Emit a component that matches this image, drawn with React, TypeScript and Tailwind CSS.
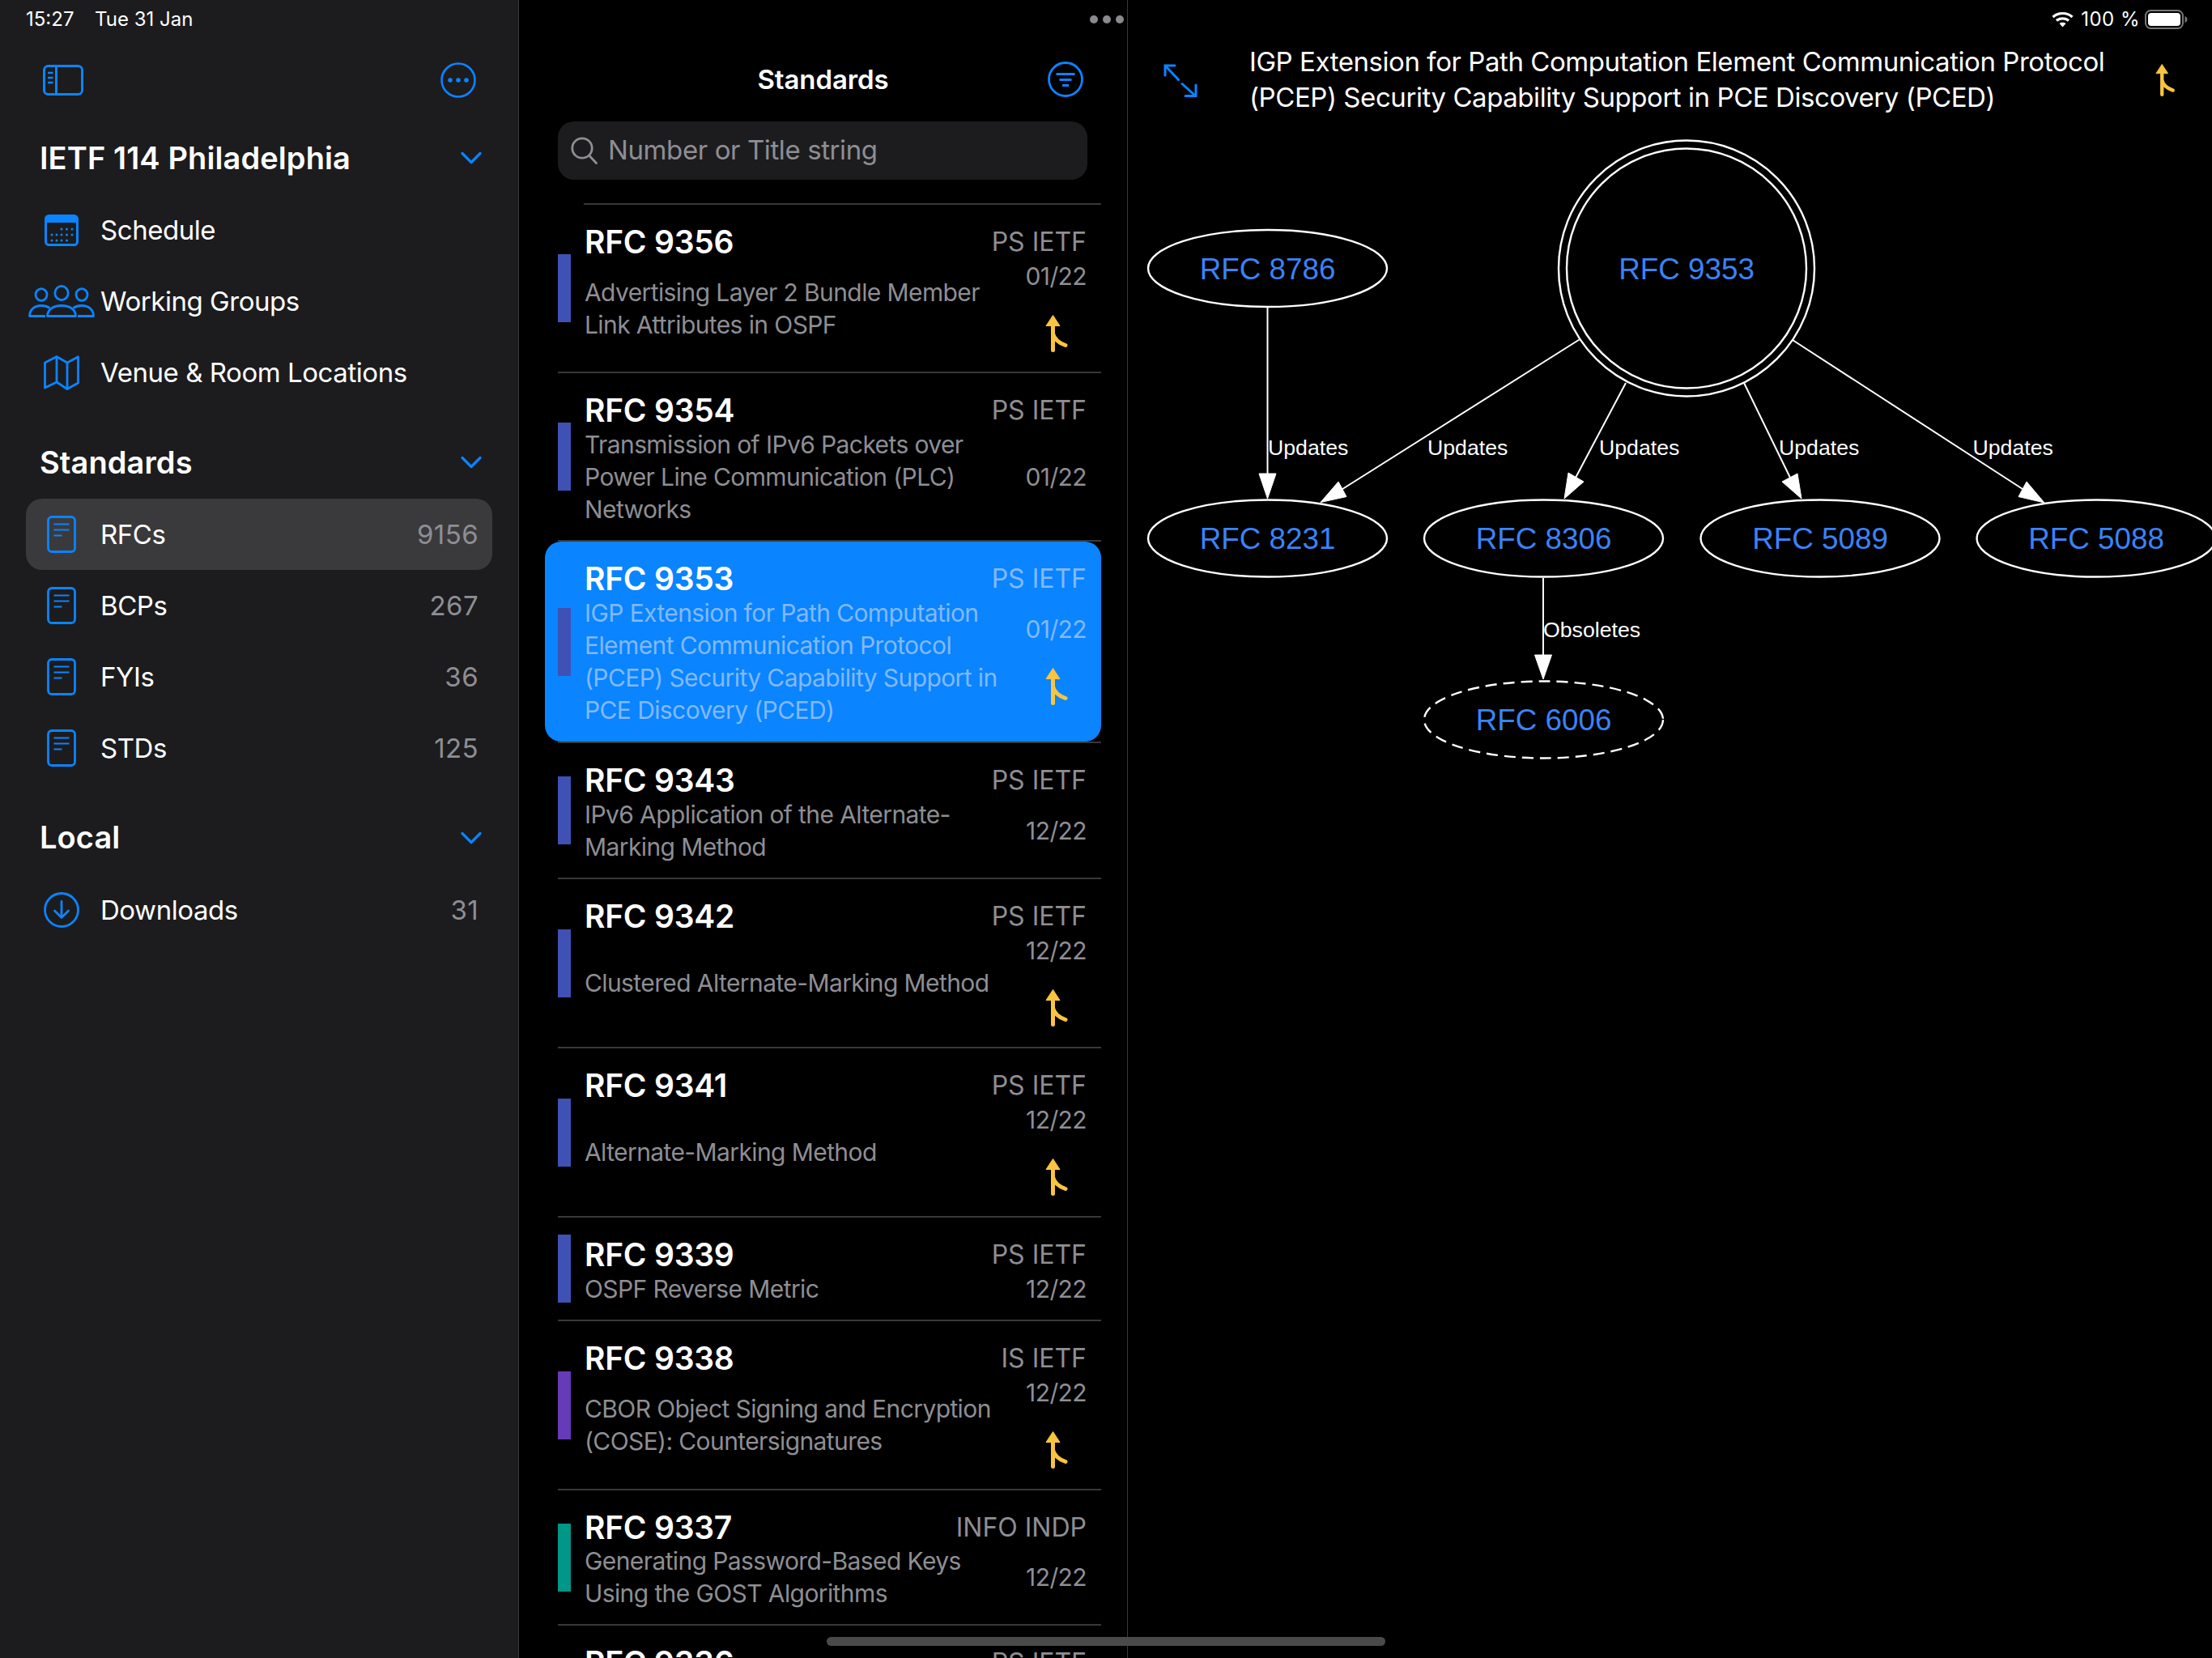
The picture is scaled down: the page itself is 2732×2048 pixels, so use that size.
import React from "react";

const BLUE = "#0a84ff";

function Chevron() {
  return (
    <svg width="26" height="16" viewBox="0 0 26 16" fill="none" stroke="#0a84ff" strokeWidth="3.2" strokeLinecap="round" strokeLinejoin="round">
      <path d="M2 2.5 L13 13.5 L24 2.5" />
    </svg>
  );
}

function SidebarToggle() {
  return (
    <svg width="50" height="38" viewBox="0 0 50 38" fill="none" stroke="#0a84ff" strokeWidth="3">
      <rect x="1.5" y="1.5" width="47" height="35" rx="5" />
      <path d="M16.5 1.5 V36.5" />
      <path d="M6 10 H12.5 M6 16 H12.5 M6 22 H12.5" strokeWidth="2.4" />
    </svg>
  );
}

function EllipsisCircle() {
  return (
    <svg width="44" height="44" viewBox="0 0 44 44" fill="none">
      <circle cx="22" cy="22" r="20.5" stroke="#0a84ff" strokeWidth="2.6" />
      <circle cx="12" cy="22" r="2.8" fill="#0a84ff" />
      <circle cx="22" cy="22" r="2.8" fill="#0a84ff" />
      <circle cx="32" cy="22" r="2.8" fill="#0a84ff" />
    </svg>
  );
}

function CalendarIcon() {
  const dots: [number, number][] = [
    [21, 18], [27.5, 18], [34, 18],
    [9, 25], [15, 25], [21, 25], [27.5, 25], [34, 25],
    [9, 32], [15, 32], [21, 32], [27.5, 32],
  ];
  return (
    <svg width="42" height="39" viewBox="0 0 42 39" fill="none">
      <rect x="1.5" y="1.5" width="39" height="36" rx="4" stroke="#0a84ff" strokeWidth="3" />
      <path d="M1 10 V5 a4 4 0 0 1 4 -4 H37 a4 4 0 0 1 4 4 V10 Z" fill="#0a84ff" />
      {dots.map(([x, y], i) => (
        <circle key={i} cx={x} cy={y} r="1.5" fill="#0a84ff" />
      ))}
    </svg>
  );
}

function PeopleIcon() {
  return (
    <svg width="82" height="40" viewBox="0 0 82 40" fill="none" stroke="#0a84ff" strokeWidth="2.8" strokeLinejoin="round">
      <ellipse cx="41" cy="10" rx="8.2" ry="8.6" />
      <ellipse cx="16" cy="12" rx="7" ry="7.4" />
      <ellipse cx="66" cy="12" rx="7" ry="7.4" />
      <path d="M23.5 38.5 C23.5 30 31 25.5 41 25.5 C51 25.5 58.5 30 58.5 38.5 Z" />
      <path d="M21 38.5 H1.5 C1.5 30 8 25.5 16 25.5 C20 25.5 23.5 26.5 26.5 28.5" />
      <path d="M61 38.5 H80.5 C80.5 30 74 25.5 66 25.5 C62 25.5 58.5 26.5 55.5 28.5" />
    </svg>
  );
}

function MapIcon() {
  return (
    <svg width="44" height="43" viewBox="0 0 44 43" fill="none" stroke="#0a84ff" strokeWidth="2.8" strokeLinejoin="round">
      <path d="M1.5 9 L16 1.5 L29 9 L42.5 1.8 V34 L29 41.5 L16 33 L1.5 40 Z" />
      <path d="M16 1.5 V33 M29 9 V41.5" />
    </svg>
  );
}

function DocIcon() {
  return (
    <svg width="36" height="46" viewBox="0 0 36 46" fill="none" stroke="#0a84ff" strokeWidth="2.8">
      <rect x="1.5" y="1.5" width="33" height="43" rx="4.5" />
      <path d="M8.5 10.5 H27.5 M8.5 17.5 H27.5 M8.5 24.5 H18.5" strokeWidth="2.2" />
    </svg>
  );
}

function DownloadIcon() {
  return (
    <svg width="44" height="44" viewBox="0 0 44 44" fill="none" stroke="#0a84ff" strokeWidth="2.8" strokeLinecap="round" strokeLinejoin="round">
      <circle cx="22" cy="22" r="20.5" />
      <path d="M22 11.5 V31 M13.5 23 L22 31.5 L30.5 23" />
    </svg>
  );
}

function FilterIcon() {
  return (
    <svg width="44" height="44" viewBox="0 0 44 44" fill="none" stroke="#0a84ff">
      <circle cx="22" cy="22" r="20.5" strokeWidth="2.8" />
      <path d="M10.5 15.5 H33.5 M14.5 22.5 H29.5 M18 29.5 H26" strokeWidth="2.8" />
    </svg>
  );
}

function SearchIcon() {
  return (
    <svg width="33" height="34" viewBox="0 0 33 34" fill="none" stroke="#8e8e93" strokeWidth="2.8" strokeLinecap="round">
      <circle cx="14" cy="14" r="12.2" />
      <path d="M23 23.5 L31.5 32.5" />
    </svg>
  );
}

function MergeArrow({ size = 46 }: { size?: number }) {
  return (
    <svg width={(size * 28) / 46} height={size} viewBox="0 0 28 46" fill="none">
      <path d="M9.5 0.5 L18 13.5 H1 Z" fill="#f9c440" stroke="#f9c440" strokeWidth="1" strokeLinejoin="round" />
      <path d="M9.5 12 V43.5 M9.5 23 C11 30 18 35 25 37.5" stroke="#f9c440" strokeWidth="5" strokeLinecap="round" />
    </svg>
  );
}

function ExpandIcon() {
  return (
    <svg width="42" height="41" viewBox="0 0 42 41" fill="none" stroke="#0a84ff" strokeWidth="3" strokeLinecap="round">
      <path d="M14 2 H2 V14 M2.5 2.5 L18.5 19.5" />
      <path d="M23 24.5 L39 39 M40 26 V39.5 H27" />
    </svg>
  );
}

function Wifi() {
  return (
    <svg width="27" height="20" viewBox="0 0 27 20" fill="none" stroke="#ffffff" strokeWidth="3.2">
      <path d="M1.5 7 C8 1 19 1 25.5 7" />
      <path d="M6 11.5 C10 8 17 8 21 11.5" />
      <path d="M13.5 19.5 L9.5 15 C11.5 13.4 15.5 13.4 17.5 15 Z" fill="#ffffff" stroke="none" />
    </svg>
  );
}

function Battery() {
  return (
    <svg width="53" height="24" viewBox="0 0 53 24" fill="none">
      <rect x="1" y="1" width="46" height="22" rx="6.5" stroke="#77777a" strokeWidth="2" />
      <rect x="4" y="4" width="40" height="16" rx="4" fill="#ffffff" />
      <path d="M49.5 8 C52 9 52.5 10.5 52.5 12 C52.5 13.5 52 15 49.5 16 Z" fill="#77777a" />
    </svg>
  );
}

function SectionHeading({ title, className }: { title: string; className: string }) {
  return (
    <div className={`flex items-center justify-between pl-[49px] pr-[45px] ${className}`}>
      <span className="text-[38px] tracking-[0.1px] font-semibold text-white">{title}</span>
      <Chevron />
    </div>
  );
}

function NavRow({ icon, label, count, active }: { icon: React.ReactNode; label: string; count?: string; active?: boolean }) {
  return (
    <div className={`mx-[32px] h-[88px] flex items-center rounded-[20px] pr-[17px] ${active ? "bg-[#3a3a3c]" : ""}`}>
      <div className="w-[88px] flex justify-center shrink-0">{icon}</div>
      <span className="ml-[4px] pt-[2px] flex-1 text-[33px] tracking-[-0.45px] text-white">{label}</span>
      {count && <span className="pt-[2px] text-[33px] tracking-[0.4px] text-[#8e8e93]">{count}</span>}
    </div>
  );
}

function Sidebar() {
  return (
    <aside className="w-[640px] shrink-0 h-full bg-[#1c1c1e]">
      <div className="h-[48px] pl-[32px] flex items-center text-[24px] text-white">
        <span className="w-[85px]">15:27</span>
        <span>Tue 31 Jan</span>
      </div>
      <div className="h-[102px] flex items-center justify-between pl-[53px] pr-[52px]">
        <SidebarToggle />
        <EllipsisCircle />
      </div>
      <SectionHeading title="IETF 114 Philadelphia" className="h-[90px]" />
      <NavRow icon={<CalendarIcon />} label="Schedule" />
      <NavRow icon={<PeopleIcon />} label="Working Groups" />
      <NavRow icon={<MapIcon />} label="Venue & Room Locations" />
      <SectionHeading title="Standards" className="mt-[22px] h-[90px]" />
      <NavRow icon={<DocIcon />} label="RFCs" count="9156" active />
      <NavRow icon={<DocIcon />} label="BCPs" count="267" />
      <NavRow icon={<DocIcon />} label="FYIs" count="36" />
      <NavRow icon={<DocIcon />} label="STDs" count="125" />
      <SectionHeading title="Local" className="mt-[21px] h-[91px]" />
      <NavRow icon={<DownloadIcon />} label="Downloads" count="31" />
    </aside>
  );
}

type Rfc = {
  num: string;
  status: string;
  date: string;
  lines: string[];
  bar: string;
  height: string;
  merge?: boolean;
  selected?: boolean;
};

const rfcs: Rfc[] = [
  { num: "RFC 9356", status: "PS IETF", date: "01/22", lines: ["Advertising Layer 2 Bundle Member", "Link Attributes in OSPF"], bar: "bg-[#3f51b5]", height: "h-[208px]", merge: true },
  { num: "RFC 9354", status: "PS IETF", date: "01/22", lines: ["Transmission of IPv6 Packets over", "Power Line Communication (PLC)", "Networks"], bar: "bg-[#3f51b5]", height: "h-[208px]" },
  { num: "RFC 9353", status: "PS IETF", date: "01/22", lines: ["IGP Extension for Path Computation", "Element Communication Protocol", "(PCEP) Security Capability Support in", "PCE Discovery (PCED)"], bar: "bg-[#3f51b5]", height: "h-[249px]", merge: true, selected: true },
  { num: "RFC 9343", status: "PS IETF", date: "12/22", lines: ["IPv6 Application of the Alternate-", "Marking Method"], bar: "bg-[#3f51b5]", height: "h-[168px]" },
  { num: "RFC 9342", status: "PS IETF", date: "12/22", lines: ["Clustered Alternate-Marking Method"], bar: "bg-[#3f51b5]", height: "h-[209px]", merge: true },
  { num: "RFC 9341", status: "PS IETF", date: "12/22", lines: ["Alternate-Marking Method"], bar: "bg-[#3f51b5]", height: "h-[209px]", merge: true },
  { num: "RFC 9339", status: "PS IETF", date: "12/22", lines: ["OSPF Reverse Metric"], bar: "bg-[#3f51b5]", height: "h-[128px]" },
  { num: "RFC 9338", status: "IS IETF", date: "12/22", lines: ["CBOR Object Signing and Encryption", "(COSE): Countersignatures"], bar: "bg-[#673ab7]", height: "h-[209px]", merge: true },
  { num: "RFC 9337", status: "INFO INDP", date: "12/22", lines: ["Generating Password-Based Keys", "Using the GOST Algorithms"], bar: "bg-[#009688]", height: "h-[167px]" },
  { num: "RFC 9336", status: "PS IETF", date: "12/22", lines: ["X.509 Certificate General-Purpose", "Extended Key Usage (EKU)"], bar: "bg-[#3f51b5]", height: "h-[168px]" },
];

function RfcRow({ rfc }: { rfc: Rfc }) {
  const muted = rfc.selected ? "text-[#82b9fd]" : "text-[#8e8e93]";
  return (
    <div className={`${rfc.height} ml-[48px] mr-[32px] border-b-2 border-[#38383a] shrink-0`}>
      <div className={`h-full flex items-center pr-[18px] ${rfc.selected ? "-ml-[16px] pl-[16px] bg-[#0a84ff] rounded-[20px]" : ""}`}>
        <div className={`w-[16px] h-[84px] shrink-0 ${rfc.bar}`} />
        <div className="ml-[17px] flex-1 min-w-0 h-full flex flex-col pt-[26px]">
          <div className="h-[40px] leading-[40px] text-[39px] font-semibold text-white tracking-[-0.25px]">{rfc.num}</div>
          <div className={`-mt-[17px] flex-1 flex flex-col justify-center text-[30px] tracking-[-0.6px] leading-[40px] whitespace-nowrap ${muted}`}>
            {rfc.lines.map((l) => (
              <div key={l}>{l}</div>
            ))}
          </div>
        </div>
        <div className={`shrink-0 h-full flex flex-col items-end pt-[26px] ${muted}`}>
          <div className="h-[40px] leading-[40px] text-[32px] whitespace-nowrap">{rfc.status}</div>
          <div className={`-mt-[17px] flex-1 flex flex-col items-end justify-center text-[30px] tracking-[-0.6px] leading-[40px] ${rfc.merge ? "pb-[6px]" : ""}`}>
            <div>{rfc.date}</div>
            {rfc.merge && (
              <div className="mt-[28px] mr-[23px]">
                <MergeArrow />
              </div>
            )}
          </div>
        </div>
      </div>
    </div>
  );
}

function ListPane() {
  return (
    <section className="relative w-[753px] shrink-0 h-full bg-black border-x border-[#38383a] flex flex-col">
      <div className="h-[48px] shrink-0 flex items-center justify-end gap-[6px] pr-[4px]">
        <span className="w-[10px] h-[10px] rounded-full bg-[#8a8a8e]" />
        <span className="w-[10px] h-[10px] rounded-full bg-[#8a8a8e]" />
        <span className="w-[10px] h-[10px] rounded-full bg-[#8a8a8e]" />
      </div>
      <div className="relative h-[102px] flex items-center justify-center shrink-0">
        <span className="text-[33px] font-semibold text-white tracking-[-0.1px]">Standards</span>
        <div className="absolute right-[54px] top-[28px]">
          <FilterIcon />
        </div>
      </div>
      <div className="ml-[48px] mr-[49px] h-[72px] rounded-[20px] bg-[#1c1c1e] flex items-center pl-[16px] shrink-0">
        <SearchIcon />
        <span className="ml-[13px] text-[33px] tracking-[-0.4px] text-[#8e8e93]">Number or Title string</span>
      </div>
      <div className="mt-[29px] ml-[80px] mr-[32px] h-[2px] bg-[#38383a] shrink-0" />
      {rfcs.map((r) => (
        <RfcRow key={r.num} rfc={r} />
      ))}
    </section>
  );
}

function Node({ cx, cy, label, dashed }: { cx: number; cy: number; label: string; dashed?: boolean }) {
  return (
    <g>
      <ellipse cx={cx} cy={cy} rx="147.5" ry="47.5" fill="none" stroke="#fff" strokeWidth="2.4" strokeDasharray={dashed ? "14 8" : undefined} />
      <text x={cx} y={cy + 13} textAnchor="middle" fontSize="36.8" fill="#3b82f6" fontFamily="'Liberation Sans', Arial, sans-serif">
        {label}
      </text>
    </g>
  );
}

function Edge({ d, head }: { d: string; head: string }) {
  return (
    <g>
      <path d={d} stroke="#fff" strokeWidth="2" fill="none" />
      <polygon points={head} fill="#fff" stroke="#fff" strokeWidth="1" />
    </g>
  );
}

function Label({ x, y, text }: { x: number; y: number; text: string }) {
  return (
    <text x={x} y={y} fontSize="26.7" fill="#fff" fontFamily="'Liberation Sans', Arial, sans-serif">
      {text}
    </text>
  );
}

function Graph() {
  return (
    <svg viewBox="1393 150 1339 900" width="1339" height="900" className="block overflow-hidden">
      <ellipse cx="2083" cy="331.5" rx="158" ry="158" fill="none" stroke="#fff" strokeWidth="2.4" />
      <ellipse cx="2083" cy="331.5" rx="148" ry="148" fill="none" stroke="#fff" strokeWidth="2.4" />
      <text x="2083" y="344.5" textAnchor="middle" fontSize="36.8" fill="#3b82f6" fontFamily="'Liberation Sans', Arial, sans-serif">RFC 9353</text>
      <Node cx={1565.5} cy={331.5} label="RFC 8786" />
      <Node cx={1565.5} cy={665} label="RFC 8231" />
      <Node cx={1906.5} cy={665} label="RFC 8306" />
      <Node cx={2248} cy={665} label="RFC 5089" />
      <Node cx={2589} cy={665} label="RFC 5088" />
      <Node cx={1906.5} cy={889} label="RFC 6006" dashed />
      <Edge d="M1565.5 380 V590" head="1555,585 1576,585 1565.5,616" />
      <Edge d="M1950.5 419.5 L1655 606" head="1653,595 1663,613.5 1631,620.5" />
      <Edge d="M2008 473 L1946 590" head="1937,584 1956,595 1932,616" />
      <Edge d="M2154 473 L2211 590" head="2220,585 2201,595 2225,616" />
      <Edge d="M2214 420 L2498 604" head="2503,595 2493,613.5 2525,621" />
      <Edge d="M1906 714 V815" head="1895.5,809 1916.5,809 1906,839" />
      <Label x={1566} y={562} text="Updates" />
      <Label x={1763} y={562} text="Updates" />
      <Label x={1975} y={562} text="Updates" />
      <Label x={2197} y={562} text="Updates" />
      <Label x={2436.5} y={562} text="Updates" />
      <Label x={1906} y={786.5} text="Obsoletes" />
    </svg>
  );
}

function DetailPane() {
  return (
    <section className="flex-1 min-w-0 h-full bg-black">
      <div className="h-[48px] flex items-center justify-end pr-[30px] text-[24px] text-white">
        <Wifi />
        <span className="ml-[9px] mr-[6px] tracking-[0.5px]">100 %</span>
        <Battery />
      </div>
      <div className="h-[102px] flex items-center pl-[44px] pr-[46px]">
        <ExpandIcon />
        <div className="ml-[64px] pb-[2px] flex-1 text-[33px] tracking-[-0.44px] leading-[44px] text-white whitespace-nowrap">
          <div>IGP Extension for Path Computation Element Communication Protocol</div>
          <div>(PCEP) Security Capability Support in PCE Discovery (PCED)</div>
        </div>
        <MergeArrow size={40} />
      </div>
      <Graph />
    </section>
  );
}

export default function App() {
  return (
    <div className="relative w-[2732px] h-[2048px] overflow-hidden bg-black flex font-['Inter',sans-serif]" style={{ color: BLUE }}>
      <Sidebar />
      <ListPane />
      <DetailPane />
      <div className="absolute left-[1021px] top-[2022px] w-[690px] h-[11px] rounded-full bg-[#4a4a4a]" />
    </div>
  );
}
